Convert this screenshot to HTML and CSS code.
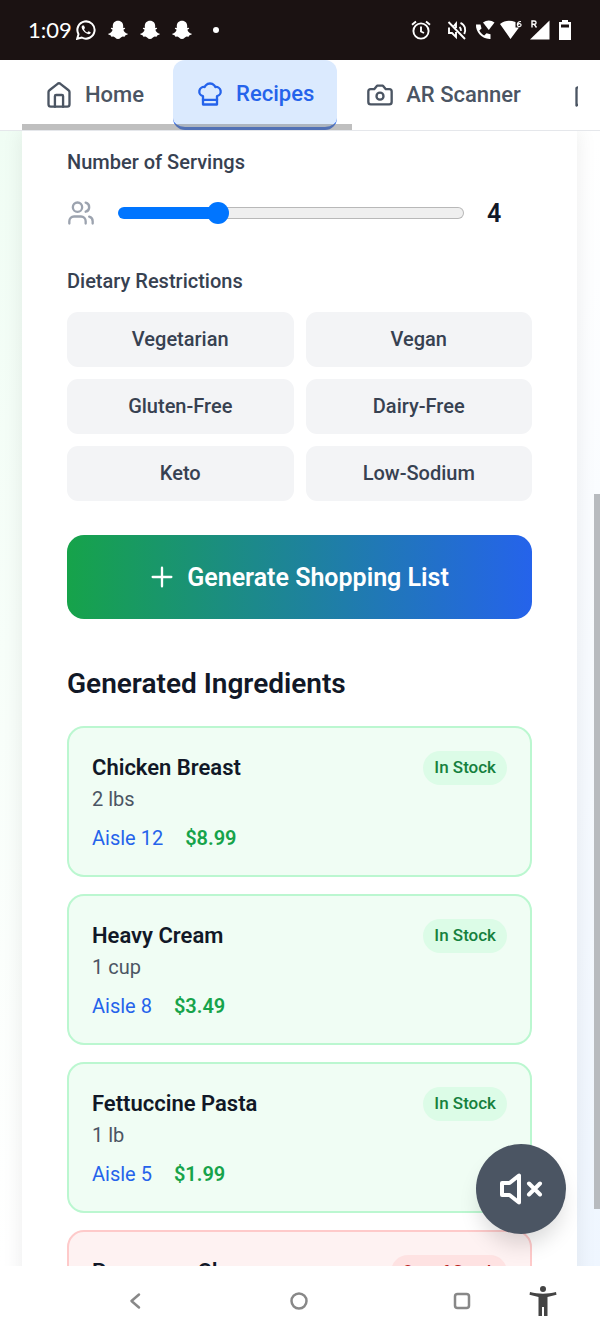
FILE: index.html
```html
<!DOCTYPE html>
<html lang="en">
<head>
<meta charset="utf-8">
<meta name="viewport" content="width=device-width, initial-scale=1">
<title>Recipes</title>
<link rel="stylesheet" href="styles.css">
</head>
<body>
<div class="phone">
  <header class="status">
    <div class="status-left">
      <span class="clock">1:09</span>
      <svg width="20" height="20" viewBox="0 0 20 20" fill="none" stroke="#fff" stroke-width="2"><path d="M1.2 18.8l1.3-4.6a8.6 8.6 0 1 1 3.3 3.3z"/><path d="M6.3 5.6c-1.1 1-.9 2.900.8 5s3.700 3.500 5.600 3.700c1.200 0 2-.9 2-2l-2.200-1.100-1.200 1.200c-1.500-.6-2.700-1.800-3.300-3.200l1-1.100-1-2.500z" fill="#fff" stroke="none"/></svg>
      <svg width="20" height="20" viewBox="0 0 20 20" fill="#fff"><path id="ghost" d="M10 .8c3.300 0 5.200 2.300 5.200 5.200v1.900l1.400-.2c1 .4.600 1.200-1.200 2 .6 2 2 3.500 4.300 4.100.4.700-.9 1.300-2.500 1.600-.3 1.300-.6 1.300-2.500 1.200-1.500.2-2.500 2.500-4.700 2.500s-3.200-2.300-4.700-2.500c-1.900.1-2.200.1-2.500-1.200C1.200 15.100-.1 14.500.3 13.800c2.300-.6 3.700-2.100 4.300-4.100-1.800-.8-2.200-1.600-1.200-2l1.400.2V6C4.800 3.100 6.700.8 10 .8z"/></svg>
      <svg width="20" height="20" viewBox="0 0 20 20" fill="#fff"><use href="#ghost"/></svg>
      <svg width="20" height="20" viewBox="0 0 20 20" fill="#fff"><use href="#ghost"/></svg>
      <span class="dot"></span>
    </div>
    <div class="status-right">
      <svg class="alarm" width="20" height="20" viewBox="0 0 20 20" fill="none" stroke="#fff" stroke-width="1.900"><circle cx="10" cy="11" r="7.600"/><path d="M10 6.500v5l3 1.500M1 4.800L5 1.500M19 4.800l-4-3.300"/></svg>
      <svg width="20" height="20" viewBox="0 0 20 20" fill="none" stroke="#fff" stroke-width="1.900"><path d="M2 7.500v5.500h3l4 4V12M6.500 6.500L9 3.500V8M12.500 7c1 .8 1.600 2 1.400 3.800M13.500 2.800c4.700 2 5.700 7 3.700 11.200M1.500 2l16.500 17"/></svg>
      <svg width="20" height="20" viewBox="0 0 20 20" fill="#fff"><path d="M1 4.500h4.500l1 4-2.200 2c1 2.100 2.700 3.900 4.900 5l2.300-2.300 4 1v4.700C7.500 19.600.4 12 1 4.500z"/><path d="M8 2.500c3.500-2.700 8-2.700 11.500 0L13.800 10z"/></svg>
      <svg class="wifi" width="22" height="20" viewBox="0 0 22 20" fill="none"><path d="M0 4c5-4 10-4 15.500-2v5.500H19L10.500 19z" fill="#fff"/><path d="M21 1.500c-3 0-3.800 1.700-3.600 3.500.2 2.300 3.700 2 3.700.1 0-1.900-2.500-2-3.300-.5" stroke="#fff" stroke-width="1.200"/></svg>
      <svg width="20" height="20" viewBox="0 0 20 20" fill="none"><path d="M19.500.5V19.500H0z" fill="#fff"/><path d="M2 7.500V1h2.200c2.500 0 2.500 3.300 0 3.300H2M4.200 4.300L6.500 7.500" stroke="#1b1212" stroke-width="3"/><path d="M2 7.500V1h2.200c2.500 0 2.500 3.300 0 3.300H2M4.200 4.300L6.500 7.500" stroke="#fff" stroke-width="1.400"/></svg>
      <svg width="14" height="20" viewBox="0 0 14 20"><path d="M1 2h3V0h6v2h3v18H1z" fill="#fff"/><path d="M3 4.500h8v3H3z" fill="#1b1212"/></svg>
    </div>
  </header>

  <nav class="nav">
    <div class="tabs">
      <a class="tab" href="#home"><svg class="icon" viewBox="0 0 24 24"><path d="M3 9.500a2 2 0 0 1 .8-1.600l7-5.500a2 2 0 0 1 2.400 0l7 5.500a2 2 0 0 1 .8 1.600V20a2 2 0 0 1-2 2H5a2 2 0 0 1-2-2z"/><path d="M8.500 22V13a1 1 0 0 1 1-1h5a1 1 0 0 1 1 1v9"/></svg>Home</a>
      <a class="tab active" href="#recipes" aria-current="page"><svg class="icon" viewBox="0 0 24 24"><path d="M6 13.870A4 4 0 0 1 7.410 6a5.110 5.110 0 0 1 1.050-1.540 5 5 0 0 1 7.080 0A5.110 5.110 0 0 1 16.590 6 4 4 0 0 1 18 13.870V21H6Z"/><path d="M6 17h12"/></svg>Recipes</a>
      <a class="tab" href="#scanner"><svg class="icon" viewBox="0 0 24 24"><path d="M14.500 4h-5L7 7H4a2 2 0 0 0-2 2v9a2 2 0 0 0 2 2h16a2 2 0 0 0 2-2V9a2 2 0 0 0-2-2h-3l-2.500-3z"/><circle cx="12" cy="13" r="3"/></svg>AR Scanner</a>
      <a class="tab" href="#map" aria-label="Store map"><svg class="icon" viewBox="0 0 24 24"><path d="M3 6l6-3 6 3 6-3v15l-6 3-6-3-6 3zM9 3v15M15 6v15"/></svg></a>
    </div>
    <div class="tabs-scroll"></div>
  </nav>

  <div class="stage">
    <main class="page">
      <section class="sheet">
        <label class="label" for="servings">Number of Servings</label>
        <div class="servings">
          <svg class="icon people" viewBox="0 0 24 24"><path d="M16 21v-2a4 4 0 0 0-4-4H6a4 4 0 0 0-4 4v2"/><circle cx="9" cy="7" r="4"/><path d="M22 21v-2a4 4 0 0 0-3-3.870M16 3.130a4 4 0 0 1 0 7.750"/></svg>
          <input class="slider" id="servings" type="range" min="1" max="12" value="4">
          <output class="count" for="servings">4</output>
        </div>
        <h3 class="label">Dietary Restrictions</h3>
        <div class="diets">
          <button class="diet" type="button">Vegetarian</button>
          <button class="diet" type="button">Vegan</button>
          <button class="diet" type="button">Gluten-Free</button>
          <button class="diet" type="button">Dairy-Free</button>
          <button class="diet" type="button">Keto</button>
          <button class="diet" type="button">Low-Sodium</button>
        </div>
        <button class="generate" type="button"><svg class="icon" viewBox="0 0 24 24"><path d="M4 12h16M12 4v16"/></svg>Generate Shopping List</button>
        <h2 class="heading">Generated Ingredients</h2>
        <ul class="items">
          <li class="item"><div><h4 class="name">Chicken Breast</h4><p class="qty">2 lbs</p><p class="meta"><span class="aisle">Aisle 12</span><span class="price">$8.99</span></p></div><span class="badge">In Stock</span></li>
          <li class="item"><div><h4 class="name">Heavy Cream</h4><p class="qty">1 cup</p><p class="meta"><span class="aisle">Aisle 8</span><span class="price">$3.49</span></p></div><span class="badge">In Stock</span></li>
          <li class="item"><div><h4 class="name">Fettuccine Pasta</h4><p class="qty">1 lb</p><p class="meta"><span class="aisle">Aisle 5</span><span class="price">$1.99</span></p></div><span class="badge">In Stock</span></li>
          <li class="item out"><div><h4 class="name">Parmesan Cheese</h4></div><span class="badge">Out of Stock</span></li>
        </ul>
      </section>
    </main>
    <div class="page-scroll"></div>
    <button class="mute" type="button" aria-label="Unmute"><svg viewBox="0 0 48 48" fill="none" stroke="#fff" stroke-width="4" stroke-linejoin="round" stroke-linecap="round"><path d="M5 18h7.500L22 10.500v27L12.500 30H5zM32 18.500l11 11M43 18.500l-11 11"/></svg></button>
  </div>

  <footer class="system">
    <div class="keys">
      <button class="sys" type="button" aria-label="Back"><svg width="20" height="20" viewBox="0 0 20 20"><path d="M14 3.500L6.500 10l7.500 6.500"/></svg></button>
      <button class="sys" type="button" aria-label="Home screen"><svg width="20" height="20" viewBox="0 0 20 20"><circle cx="10" cy="10" r="7.500"/></svg></button>
      <button class="sys" type="button" aria-label="Recent apps"><svg width="20" height="20" viewBox="0 0 20 20"><rect x="3" y="3" width="14" height="14" rx="2.500"/></svg></button>
    </div>
    <button class="sys access" type="button" aria-label="Accessibility"><svg width="28" height="30" viewBox="0 0 28 30"><circle cx="14" cy="3" r="3"/><path d="M1 6c8.500 2.300 17.500 2.300 26 0l.5 2.800L18.500 11v19h-3.500v-9h-2v9H9.500V11L.5 8.800z"/></svg></button>
  </footer>
</div>
</body>
</html>
```
FILE: styles.css
```css
* { box-sizing: border-box; margin: 0; padding: 0; }

body { font-family: Roboto, "Liberation Sans", sans-serif; color: #111827; background: #fff; }
button { border: 0; background: none; font: inherit; color: inherit; cursor: pointer; }

.phone { display: flex; flex-direction: column; height: 100vh; overflow: hidden; }

.status { flex: none; display: flex; justify-content: space-between; align-items: center; height: 60px; padding: 0 28px; background: #1b1212; color: #fff; }
.status-left, .status-right { display: flex; align-items: center; }
.status-left { gap: 12px; }
.status-right { gap: 8px; }
.alarm { margin-right: 8px; }
.wifi { margin-left: -3px; }
.clock { margin-right: -8px; font: 22px/30px Lato, sans-serif; }
.dot { width: 6px; height: 6px; margin-left: 9px; border-radius: 50%; background: #fff; }

.icon { flex: none; width: 28px; height: 28px; fill: none; stroke: currentColor; stroke-width: 2; stroke-linecap: round; stroke-linejoin: round; }

.nav { position: relative; flex: none; padding: 0 22px; border-bottom: 1px solid #e5e7eb; background: #fff; }
.tabs { display: flex; gap: 6px; height: 70px; overflow: hidden; }
.tab { flex: none; display: flex; align-items: center; gap: 12px; padding: 0 23px; border-bottom: 1px solid transparent; color: #4b5563; font-size: 22px; font-weight: 500; text-decoration: none; }
.tab.active { border-bottom: 3px solid #2563eb; border-radius: 12px; background: #dbeafe; color: #2563eb; }
.tabs-scroll { position: absolute; left: 22px; bottom: 0; width: 55%; height: 6px; background: rgba(128, 128, 128, .5); }

.stage { position: relative; flex: 1; min-height: 0; }
.page { height: 100%; overflow: hidden; padding: 0 23px 0 22px; background: linear-gradient(to bottom right, #f0fdf4, #fff, #eff6ff); }
.sheet { min-height: 100%; padding: 17px 45px; background: #fff; box-shadow: 0 0 20px rgba(0, 0, 0, .08); }

.label { display: block; color: #374151; font-size: 20px; font-weight: 500; line-height: 28px; }
.servings { display: flex; align-items: center; gap: 23px; height: 40px; margin: 17px 0 34px; }
.people { color: #9ca3af; }
.count { width: 45px; font-size: 25px; font-weight: 600; }

.slider { flex: 1; min-width: 0; height: 22px; appearance: none; background: none; }
.slider::-webkit-slider-runnable-track { height: 12px; border: 1px solid transparent; border-radius: 6px; background: linear-gradient(to right, #0075ff 29%, transparent 29%) border-box, linear-gradient(#efefef, #efefef) padding-box, linear-gradient(#b8b8b8, #b8b8b8) border-box; }
.slider::-webkit-slider-thumb { appearance: none; width: 22px; height: 22px; margin-top: -6px; border-radius: 50%; background: #0075ff; }

.diets { display: grid; grid-template-columns: 1fr 1fr; gap: 12px; margin-top: 17px; }
.diet { height: 55px; padding-bottom: 2px; border-radius: 11px; background: #f3f4f6; color: #374151; font-size: 20px; font-weight: 500; }

.generate { display: flex; align-items: center; justify-content: center; gap: 11px; width: 100%; height: 84px; margin-top: 34px; padding-right: 2px; border-radius: 17px; background: linear-gradient(to right, #16a34a, #2563eb); color: #fff; font-size: 25px; font-weight: 600; }

.heading { margin: 45px 0 22px; font-size: 28px; font-weight: 600; line-height: 40px; }

.items { display: grid; gap: 17px; list-style: none; }
.item { display: flex; justify-content: space-between; align-items: flex-start; min-height: 151px; padding: 23px; border: 2px solid #bbf7d0; border-radius: 17px; background: #f0fdf4; }
.name { font-size: 22px; font-weight: 600; line-height: 34px; }
.qty { color: #4b5563; font-size: 20px; line-height: 28px; }
.meta { display: flex; gap: 22px; margin-top: 11px; font-size: 20px; line-height: 28px; }
.aisle { color: #2563eb; }
.price { color: #16a34a; font-weight: 600; }
.badge { padding: 4px 11px 6px; border-radius: 17px; background: #dcfce7; color: #15803d; font-size: 17px; font-weight: 500; line-height: 24px; }
.item.out { border-color: #fecaca; background: #fef2f2; }
.out .badge { background: #fee2e2; color: #b91c1c; }

.page-scroll { position: absolute; right: 0; top: 32%; bottom: 5%; width: 6px; background: #b8bbbf; }
.mute { position: absolute; right: 34px; bottom: 32px; display: grid; place-items: center; width: 90px; height: 90px; border-radius: 50%; background: #4b5563; box-shadow: 0 14px 21px -4px rgba(0, 0, 0, .15); }
.mute svg { width: 48px; height: 48px; }

.system { flex: none; display: flex; align-items: center; gap: 57px; height: 69px; padding: 0 43px 0 125px; background: #fff; }
.keys { flex: 1; display: flex; justify-content: space-between; }
.sys { display: grid; place-items: center; }
.sys svg { fill: none; stroke: #888; stroke-width: 2.5; stroke-linecap: round; stroke-linejoin: round; }
.access svg { fill: #444; stroke: none; }
```
